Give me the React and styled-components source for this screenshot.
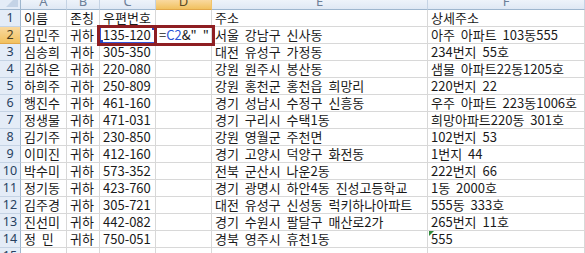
import React from "react";
import styled, { createGlobalStyle } from "styled-components";

const Global = createGlobalStyle`
  html, body { margin: 0; padding: 0; background: #fff; overflow: hidden; }
  body { font-family: "Noto Sans CJK KR", "Noto Sans", sans-serif; }
`;

const COLS = [21, 46, 33, 56, 56, 216, 157];

const Sheet = styled.div`
  position: relative;
  width: 585px;
  height: 253px;
  overflow: hidden;
  display: grid;
  grid-template-columns: ${COLS.map((c) => c + "px").join(" ")};
  grid-template-rows: 10px repeat(15, 17px);
`;

const Corner = styled.div`
  box-sizing: border-box;
  background: #e4ecf7;
  border-right: 1px solid #9eb6ce;
  border-bottom: 1px solid #9eb6ce;
  position: relative;
  overflow: hidden;
  &::after {
    content: "";
    position: absolute;
    right: 2px;
    bottom: 2px;
    width: 0;
    height: 0;
    border-left: 12px solid transparent;
    border-bottom: 12px solid #c4d3e6;
  }
`;

const ColHead = styled.div`
  box-sizing: border-box;
  background: ${(p) =>
    p.$active
      ? "linear-gradient(#f9d99f, #f1c15f)"
      : "linear-gradient(#eef3fa, #dfe8f4)"};
  border-right: 1px solid ${(p) => (p.$active ? "#f2c46a" : "#c5d3e4")};
  border-bottom: 1px solid ${(p) => (p.$active ? "#e2a84a" : "#9eb6ce")};
  color: ${(p) => (p.$active ? "#5b4a27" : "#6d7f98")};
  font-family: "Noto Sans", "Liberation Sans", sans-serif;
  font-size: 13px;
  line-height: 15px;
  display: flex;
  align-items: flex-end;
  justify-content: center;
  overflow: hidden;
`;

const RowHead = styled.div`
  box-sizing: border-box;
  background: ${(p) =>
    p.$active ? "linear-gradient(#f9d99f, #f1c15f)" : "#e4ecf7"};
  border-right: 1px solid #9eb6ce;
  border-bottom: 1px solid ${(p) => (p.$active ? "#e2a84a" : "#c5d3e4")};
  color: ${(p) => (p.$active ? "#4a3d20" : "#27415f")};
  font-family: "Noto Sans", "Liberation Sans", sans-serif;
  font-size: 12.5px;
  display: flex;
  align-items: center;
  justify-content: center;
  line-height: 16px;
  overflow: hidden;
`;

const Cell = styled.div`
  box-sizing: border-box;
  border-right: 1px solid #d8d8d8;
  border-bottom: 1px solid #d8d8d8;
  color: #1a1a1a;
  font-size: 13px;
  word-spacing: 3px;
  line-height: 16px;
  padding-left: 3px;
  white-space: nowrap;
  overflow: ${(p) => (p.$overflow ? "visible" : "hidden")};
  position: relative;
  display: flex;
  align-items: center;
`;

const Ref = styled.span`
  color: #2a52d6;
`;

const Caret = styled.span`
  display: inline-block;
  width: 1px;
  height: 13px;
  background: #000;
  margin-left: 5px;
`;

const ErrorMark = styled.span`
  position: absolute;
  left: 1px;
  top: 0;
  width: 0;
  height: 0;
  border-top: 5px solid #2f8a3a;
  border-right: 5px solid transparent;
`;

const Mark = styled.div`
  position: absolute;
  box-sizing: border-box;
  border: 3px solid #8e1e22;
  pointer-events: none;
`;

const RefBox = styled.div`
  position: absolute;
  box-sizing: border-box;
  border: 1px solid #3557d8;
  pointer-events: none;
  &::before,
  &::after {
    content: "";
    position: absolute;
    width: 4px;
    height: 4px;
    background: #2342c0;
  }
  &::before { left: -2px; bottom: -2px; }
  &::after { right: -2px; top: -2px; }
`;

const rows = [
  ["이름", "존칭", "우편번호", null, "주소", "상세주소"],
  ["김민주", "귀하", "135-120", "formula", "서울 강남구 신사동", "아주 아파트 103동555"],
  ["심송희", "귀하", "305-350", "", "대전 유성구 가정동", "234번지 55호"],
  ["김하은", "귀하", "220-080", "", "강원 원주시 봉산동", "샘물 아파트22동1205호"],
  ["하희주", "귀하", "250-809", "", "강원 홍천군 홍천읍 희망리", "220번지 22"],
  ["행진수", "귀하", "461-160", "", "경기 성남시 수정구 신흥동", "우주 아파트 223동1006호"],
  ["정생물", "귀하", "471-031", "", "경기 구리시 수택1동", "희망아파트220동 301호"],
  ["김기주", "귀하", "230-850", "", "강원 영월군 주천면", "102번지 53"],
  ["이미진", "귀하", "412-160", "", "경기 고양시 덕양구 화전동", "1번지 44"],
  ["박수미", "귀하", "573-352", "", "전북 군산시 나운2동", "222번지 66"],
  ["정기동", "귀하", "423-760", "", "경기 광명시 하안4동 진성고등학교", "1동 2000호"],
  ["김주경", "귀하", "305-721", "", "대전 유성구 신성동 럭키하나아파트", "555동 333호"],
  ["진선미", "귀하", "442-082", "", "경기 수원시 팔달구 매산로2가", "265번지 11호"],
  ["정 민", "귀하", "750-051", "", "경북 영주시 휴천1동", "555"],
  ["", "", "", "", "", ""],
];

export default function App() {
  const letters = ["A", "B", "C", "D", "E", "F"];
  return (
    <>
      <Global />
      <Sheet>
        <Corner />
        {letters.map((l) => (
          <ColHead key={l} $active={l === "D"}>
            {l}
          </ColHead>
        ))}
        {rows.map((r, i) => (
          <React.Fragment key={i}>
            <RowHead $active={i === 1}>{i + 1}</RowHead>
            {r.map((v, j) => {
              if (v === "formula") {
                return (
                  <Cell key={j} $overflow>
                    =<Ref>C2</Ref>&amp;" "
                    <Caret />
                  </Cell>
                );
              }
              return (
                <Cell key={j}>
                  {i === 13 && j === 5 && <ErrorMark />}
                  {v}
                </Cell>
              );
            })}
          </React.Fragment>
        ))}
        <RefBox style={{ left: 100, top: 27, width: 55, height: 16 }} />
        <Mark style={{ left: 97, top: 25, width: 60, height: 21 }} />
        <Mark style={{ left: 154, top: 25, width: 61, height: 21 }} />
      </Sheet>
    </>
  );
}
